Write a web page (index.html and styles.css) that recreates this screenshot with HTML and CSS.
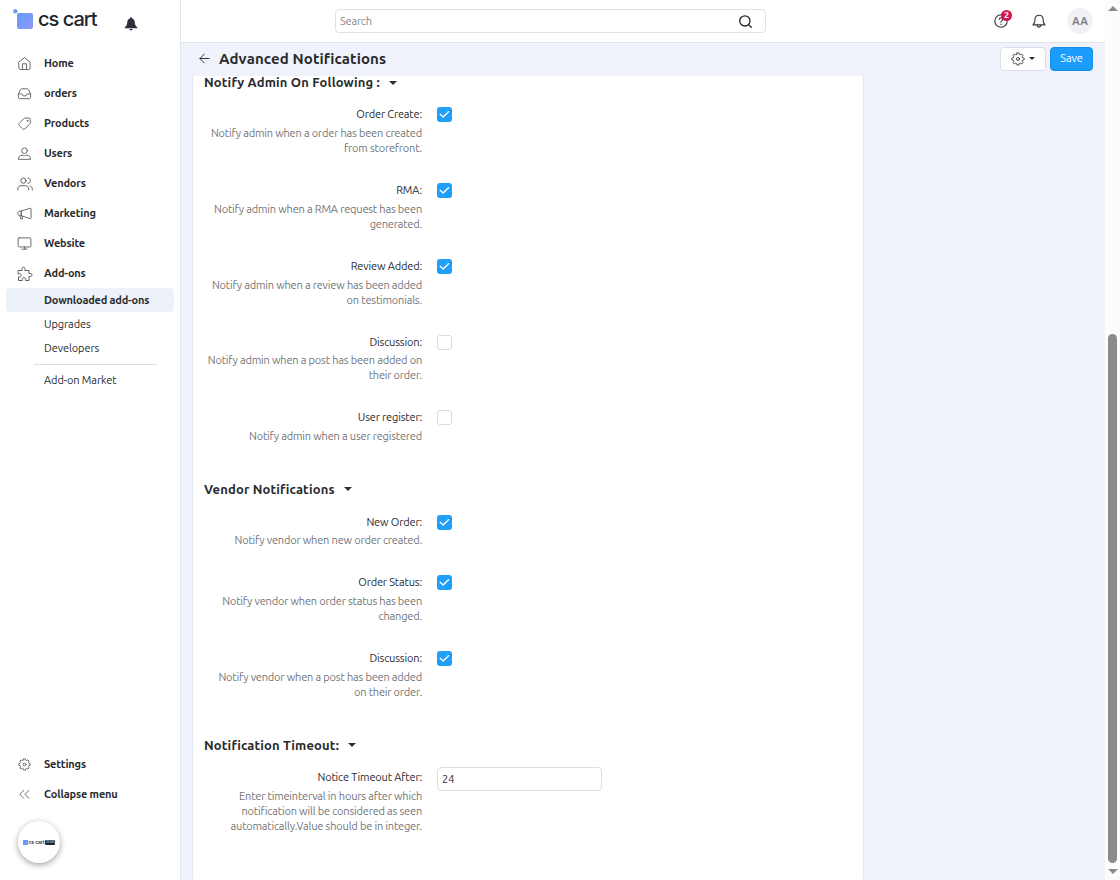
FILE: index.html
```html
<!DOCTYPE html>
<html lang="en">
<head>
<meta charset="utf-8">
<title>Advanced Notifications</title>
<link rel="stylesheet" href="styles.css">
</head>
<body>
<svg class="defs" width="0" height="0" aria-hidden="true">
  <symbol id="gear" viewBox="0 .5 16 16"><path d="M6.9 1.5h2.2l.4 1.7 1.2.5 1.5-.9 1.5 1.5-.9 1.5.5 1.2 1.7.4v2.2l-1.7.4-.5 1.2.9 1.5-1.5 1.5-1.5-.9-1.2.5-.4 1.7H6.9l-.4-1.7-1.2-.5-1.5.9-1.5-1.5.9-1.5-.5-1.2L1 9.600V7.400l1.700-.4.5-1.200-.9-1.500 1.500-1.500 1.500.9 1.200-.5z"/><circle cx="8" cy="8.500" r="1.700"/></symbol>
  <symbol id="tick" viewBox="0 0 15 15"><path d="M3.200 7.300l2.900 2.800 5.400-5.400"/></symbol>
</svg>
<div class="app">
  <aside class="sidebar">
    <div class="brand">
      <svg class="brand-mark" width="21" height="22" viewBox="0 0 21 22"><defs><linearGradient id="g" x1="0" y1="0" x2="1" y2="1"><stop offset="0" stop-color="#5f9df8"/><stop offset="1" stop-color="#8f98fa"/></linearGradient></defs><circle cx="2.300" cy="2.200" r="2.200" fill="#6e9bf5"/><rect x="4" y="4" width="16" height="16" rx="2" fill="url(#g)"/></svg>
      <span class="brand-name">cs cart</span>
      <svg class="brand-bell" width="14" height="14" viewBox="0 0 14 14"><path d="M7 .3c.7 0 1 .5 1 1.100 2 .5 2.700 2.100 2.800 4.100.1 2.500.7 3.300 2.500 4.900v.9H.7v-.9c1.800-1.600 2.400-2.400 2.500-4.900C3.300 3.500 4 1.900 6 1.400 6 .8 6.300.3 7 .3zM5.300 12h3.400c-.2.900-.8 1.400-1.700 1.400S5.500 12.900 5.300 12z" fill="#2b2f38"/></svg>
    </div>
    <nav class="nav">
      <a class="nav-item"><svg class="ico" viewBox="0 0 16 16"><path d="M2 6.500L8 1.700l6 4.800v6.600c0 .8-.5 1.300-1.300 1.300H3.300c-.8 0-1.300-.5-1.300-1.300zM5.800 14.200V8.300h4.400v5.900"/></svg>Home</a>
      <a class="nav-item"><svg class="ico" viewBox="0 0 16 16"><path d="M1.500 8.500l2.200-4.600c.3-.6.700-.9 1.300-.9h6c.6 0 1 .3 1.300.9l2.200 4.600v3.700c0 .8-.5 1.300-1.300 1.300H2.800c-.8 0-1.300-.5-1.300-1.300zM1.500 8.500h3.700l1.300 2h3l1.300-2h3.700"/></svg>orders</a>
      <a class="nav-item"><svg class="ico" viewBox="0 0 16 16"><path d="M8.500 2.200h4.200c.9 0 1.500.6 1.500 1.500v4.200l-6 6.100c-.6.500-1.200.5-1.800 0L2.200 9.800c-.5-.6-.5-1.200 0-1.800z"/><circle cx="11.200" cy="5.200" r=".5"/></svg>Products</a>
      <a class="nav-item"><svg class="ico" viewBox="0 0 16 16"><circle cx="8" cy="5" r="3"/><path d="M1.500 13.800c0-2.800 1.700-4 4.300-4 .8.500 3.600.5 4.400 0 2.600 0 4.300 1.200 4.300 4z"/></svg>Users</a>
      <a class="nav-item"><svg class="ico ico-wide" viewBox="0 0 16 16"><circle cx="6.400" cy="4.700" r="2.600"/><path d="M.8 14v-.8c0-2.200 1.400-3.500 3.500-3.500h3.900c2.100 0 3.500 1.300 3.500 3.500v.8M10.900 2.200c1.700.3 2.500 1.300 2.500 2.600s-.8 2.300-2.500 2.600M13 10c1.500.4 2.300 1.500 2.300 3.200v.8"/></svg>Vendors</a>
      <a class="nav-item"><svg class="ico" viewBox="0 0 16 16"><path d="M4.800 5.300L13.800 2.400c.7-.1 1.200.1 1.200.8v9.400c0 .6-.5.900-1.200.8L4.800 10.400zM4.800 5.300C2.300 5.200.8 6.200.8 7.900s1.500 2.600 4 2.500M3 10.500l1.200 3.300h2l-1.100-3.200M4.800 5.300v5.100"/></svg>Marketing</a>
      <a class="nav-item"><svg class="ico" viewBox="0 0 16 16"><rect x="1.200" y="2" width="13.600" height="9.700" rx="1.200"/><path d="M8 11.700v2.300M5.300 14h5.400"/></svg>Website</a>
      <a class="nav-item"><svg class="ico ico-wide" viewBox="0 0 16 16"><path d="M1.500 4.500h3.700C4.700 2.700 5.200 1.200 6.500 1.200s1.900 1.500 1.300 3.300H12v3.200c1.800-.5 3 0 3 1.300s-1.200 1.900-3 1.300v4.200H8.600c.5-1.700 0-2.800-1.600-2.800s-2.100 1.100-1.600 2.800H1.500v-3.700c1.800.5 2.800-.2 2.800-1.500S3.300 7.500 1.500 7.900z"/></svg>Add-ons</a>
    </nav>
    <div class="subnav">
      <a class="sub-item sub-active">Downloaded add-ons</a>
      <a class="sub-item">Upgrades</a>
      <a class="sub-item">Developers</a>
      <hr class="sub-line">
      <a class="sub-item">Add-on Market</a>
    </div>
    <div class="nav nav-bottom">
      <a class="nav-item"><svg class="ico ico-small"><use href="#gear"/></svg>Settings</a>
      <a class="nav-item"><svg class="ico" viewBox="0 0 16 16"><path d="M7.200 3.500L3 7.800l4.200 4.300M12.700 3.500L8.500 7.800l4.200 4.300"/></svg>Collapse menu</a>
    </div>
    <div class="bubble"><i class="bubble-mark"></i><b class="bubble-name">cs cart</b><span class="bubble-tag">DEMO</span></div>
  </aside>
  <main class="main">
    <header class="top">
      <div class="search"><span>Search</span><svg width="13" height="13" viewBox="0 0 15 15"><circle cx="6.800" cy="6.800" r="5.900"/><path d="M11.100 11.100l3 3"/></svg></div>
      <div class="tools">
        <div class="help"><svg width="14" height="14" viewBox="0 0 14 14"><circle cx="7" cy="7" r="6.200"/><path d="M5.200 5.500c.1-1 .8-1.600 1.800-1.600s1.800.6 1.800 1.500c0 1.200-1.800 1.300-1.800 2.700M7 10v.4"/></svg><span class="badge">2</span></div>
        <svg class="bell" width="14" height="15" viewBox="0 0 14 15"><path d="M7 1.200c2.500 0 4 1.700 4 4 0 2.900.4 4 2 5.700H1c1.600-1.700 2-2.800 2-5.700 0-2.300 1.500-4 4-4zM5.300 11c0 2.800 3.400 2.800 3.400 0"/></svg>
        <span class="avatar">AA</span>
      </div>
    </header>
    <div class="titlebar">
      <svg class="back" width="11" height="11" viewBox="0 0 11 11"><path d="M10.200 5.500H1M5.300 1.100L.9 5.500l4.400 4.400"/></svg>
      <h1 class="title">Advanced Notifications</h1>
      <div class="actions">
        <button class="btn btn-gear"><svg width="14" height="14"><use href="#gear"/></svg><i class="caret"></i></button>
        <button class="btn btn-save">Save</button>
      </div>
    </div>
    <section class="card">
      <h2 class="head head-first">Notify Admin On Following :<i class="caret caret-lg"></i></h2>
      <div class="row"><div class="label"><b>Order Create:</b><p>Notify admin when a order has been created<br>from storefront.</p></div><i class="box on"><svg><use href="#tick"/></svg></i></div>
      <div class="row"><div class="label"><b>RMA:</b><p>Notify admin when a RMA request has been<br>generated.</p></div><i class="box on"><svg><use href="#tick"/></svg></i></div>
      <div class="row"><div class="label"><b>Review Added:</b><p>Notify admin when a review has been added<br>on testimonials.</p></div><i class="box on"><svg><use href="#tick"/></svg></i></div>
      <div class="row"><div class="label"><b>Discussion:</b><p>Notify admin when a post has been added on<br>their order.</p></div><i class="box"></i></div>
      <div class="row"><div class="label"><b>User register:</b><p>Notify admin when a user registered</p></div><i class="box"></i></div>
      <h2 class="head">Vendor Notifications<i class="caret caret-lg"></i></h2>
      <div class="row"><div class="label"><b>New Order:</b><p>Notify vendor when new order created.</p></div><i class="box on"><svg><use href="#tick"/></svg></i></div>
      <div class="row"><div class="label"><b>Order Status:</b><p>Notify vendor when order status has been<br>changed.</p></div><i class="box on"><svg><use href="#tick"/></svg></i></div>
      <div class="row"><div class="label"><b>Discussion:</b><p>Notify vendor when a post has been added<br>on their order.</p></div><i class="box on"><svg><use href="#tick"/></svg></i></div>
      <h2 class="head">Notification Timeout:<i class="caret caret-lg"></i></h2>
      <div class="row"><div class="label"><b>Notice Timeout After:</b><p>Enter timeinterval in hours after which<br>notification will be considered as seen<br>automatically.Value should be in integer.</p></div><div class="field">24</div></div>
    </section>
  </main>
  <div class="scroll"><i class="up"></i><i class="thumb"></i><i class="down"></i></div>
</div>
</body>
</html>
```
FILE: styles.css
```css
* { box-sizing: border-box; }
body { margin: 0; background: #fff; color: #292b2e; font: 11px "Ubuntu", "Open Sans", "Noto Sans", sans-serif; overflow: hidden; }
h1, h2, p { margin: 0; }
svg { fill: none; stroke: #33363b; stroke-linecap: round; stroke-linejoin: round; flex: none; }
.defs { display: none; }
.app { display: flex; width: 1120px; height: 880px; overflow: hidden; white-space: nowrap; }

.sidebar { width: 181px; flex: none; border-right: 1px solid #e1e8f3; display: flex; flex-direction: column; background: #fff; }
.brand { height: 48px; padding: 9px 0 0 13px; display: flex; align-items: flex-start; }
.brand svg { stroke: none; }
.brand-name { margin-left: 4px; width: 60px; font: 500 20px/21px "Inter", sans-serif; color: #22252f; letter-spacing: -1px; }
.brand-bell { margin: 8px 0 0 26px; }
.nav-item { height: 30px; padding-left: 17px; display: flex; align-items: center; gap: 12px; font-weight: 700; letter-spacing: -.16px; }
.ico { width: 15px; height: 15px; stroke: #606368; stroke-width: 1; margin-top: 1px; }
.ico-wide { width: 16px; height: 16px; margin-right: -1px; }
.ico-small { width: 13px; height: 13px; margin: 0 1px; stroke-width: 1.1; }
.subnav { padding: 0 6px; }
.sub-item { display: flex; align-items: center; height: 24px; padding-left: 38px; border-radius: 4px; letter-spacing: -.08px; }
.sub-active { background: #edf1f8; font-weight: 700; letter-spacing: -.19px; }
.sub-line { border: 0; height: 1px; background: #dcdfe4; margin: 4px 17px 3px 28px; }
.nav-bottom { margin-top: auto; }
.bubble { width: 42px; height: 42px; margin: 12px 0 17px 18px; border-radius: 50%; box-shadow: 0 2px 6px rgba(0,0,0,.36); display: flex; align-items: center; justify-content: center; gap: 1px; }
.bubble-mark { width: 5px; height: 5px; background: #669bf8; }
.bubble-name { font: 600 5px/8px "Inter", sans-serif; color: #2a2e3a; letter-spacing: -.1px; }
.bubble-tag { font: 700 3px/5px "Inter", sans-serif; color: #8f96a8; background: #23293b; width: 10px; text-align: center; border-radius: 1px; }

.main { flex: 1; background: #f0f3fb; display: flex; flex-direction: column; min-width: 0; }
.top { height: 43px; flex: none; background: #fff; border-bottom: 1px solid #e0e4ed; display: flex; align-items: center; padding: 0 12px 0 154px; justify-content: space-between; }
.search { width: 431px; height: 24px; border: 1px solid #dfe2e8; border-radius: 4px; padding: 0 13px 0 4px; display: flex; align-items: center; justify-content: space-between; color: #85878b; letter-spacing: -.2px; }
.search svg { stroke: #222; stroke-width: 1.5; }
.tools { display: flex; align-items: center; }
.tools svg { display: block; stroke-width: 1.1; }
.help { position: relative; margin-right: 24px; }
.badge { position: absolute; left: 7px; top: -4px; width: 11px; height: 11px; border-radius: 50%; background: #d4144f; color: #fff; font-weight: 700; font-size: 9px; line-height: 11px; text-align: center; }
.bell { margin-right: 21px; }
.avatar { width: 26px; height: 26px; border-radius: 50%; background: #f0f2f7; color: #7f8085; font-weight: 700; line-height: 26px; text-align: center; }
.titlebar { height: 33px; flex: none; display: flex; align-items: center; padding: 0 12px 2px 18px; }
.title { margin-left: 9px; font-size: 15px; line-height: 20px; letter-spacing: .11px; }
.actions { margin-left: auto; display: flex; gap: 4px; }
.btn { height: 24px; border-radius: 4px; font: inherit; padding: 0; display: flex; align-items: center; justify-content: center; }
.btn-gear { width: 46px; background: #fff; border: 1px solid #dadee6; gap: 4px; }
.btn-save { width: 43px; background: #1c9cfb; border: 1px solid #168fe9; color: #fff; padding-bottom: 1px; letter-spacing: -.1px; }
.caret { border: 3px solid transparent; border-top-color: #2d2f33; border-bottom: 0; }
.caret-lg { border-width: 4px 4px 0; margin-left: 9px; }

.card { width: 672px; flex: 1; margin-left: 11px; padding-left: 11px; background: #fff; border: solid #e3e7ef; border-width: 0 1px; border-radius: 0 0 3px 3px; }
.head { display: flex; align-items: center; height: 22px; margin: 34.250px 0 11.200px; font-size: 13px; line-height: 22px; letter-spacing: .16px; }
.head-first { height: 13px; margin: 0 0 15.200px; line-height: 13px; }
.row { display: flex; gap: 15px; margin-bottom: 24.050px; }
.label { width: 218px; text-align: right; }
.label b { display: block; font-weight: 400; line-height: 20px; height: 21.750px; letter-spacing: -.15px; }
.label p { line-height: 15px; color: #737578; letter-spacing: -.18px; }
.box { width: 15px; height: 15px; margin-top: 3px; border: 1px solid #d9dcdf; border-radius: 3px; background: #fff; }
.on { border: 0; background: #1f9ff9; }
.box svg { display: block; width: 15px; height: 15px; stroke: #fff; stroke-width: 1.400; }
.field { width: 165px; height: 24px; border: 1px solid #dddfe2; border-radius: 4px; line-height: 22px; padding-left: 4px; }

.scroll { width: 15px; flex: none; background: #fcfcfc; display: flex; flex-direction: column; align-items: center; }
.up { margin-top: 6px; border: 5px solid transparent; border-top: 0; border-bottom-color: #8b8b8b; }
.thumb { margin: 323px 0 6px; width: 9px; height: 529px; border-radius: 5px; background: #8b8b8b; }
.down { border: 5px solid transparent; border-bottom: 0; border-top-color: #8b8b8b; }
```
